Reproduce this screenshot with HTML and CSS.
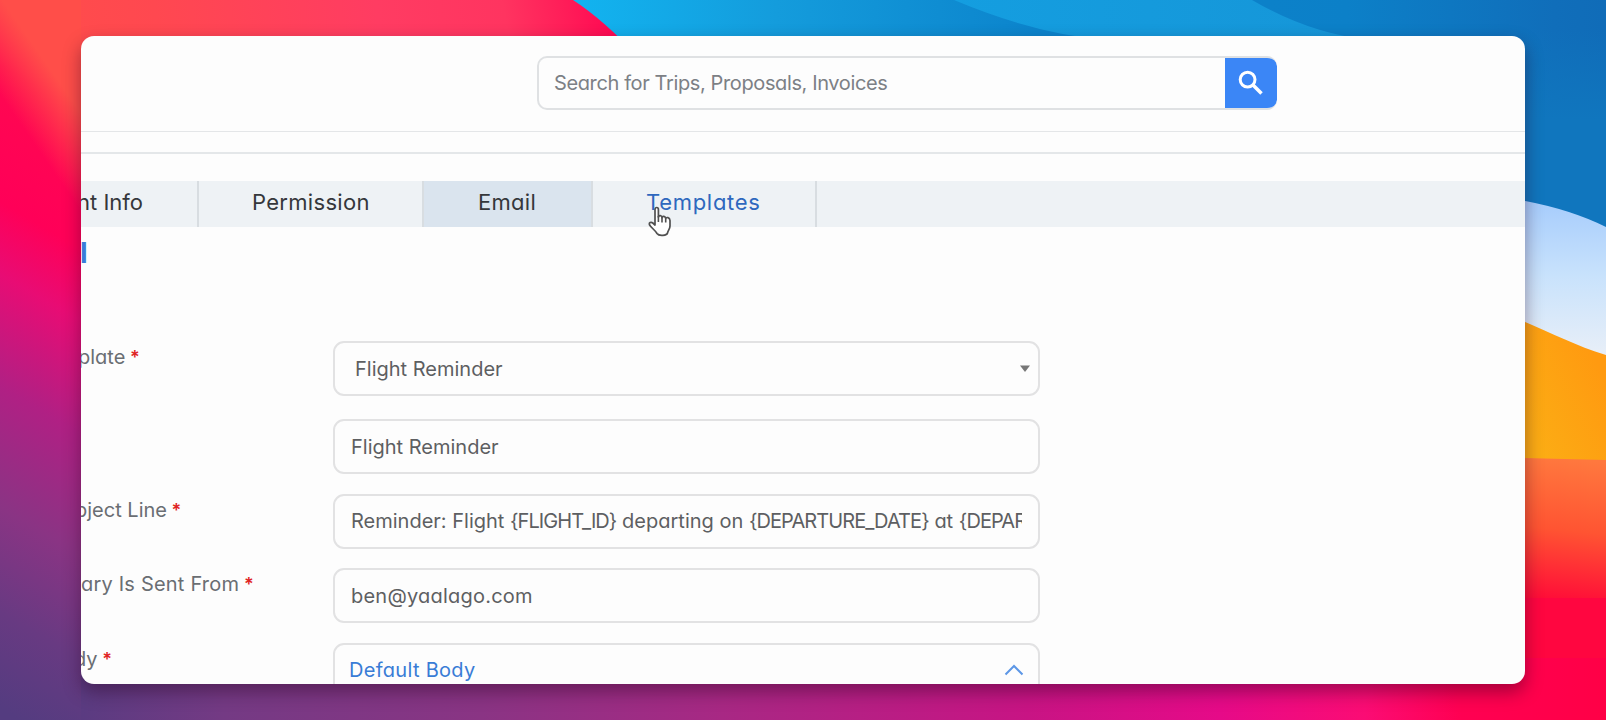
FILE: index.html
```html
<!DOCTYPE html>
<html lang="en">
<head>
<meta charset="utf-8">
<title>Email templates</title>
<link rel="stylesheet" href="styles.css">
</head>
<body>
<svg class="wallpaper" viewBox="0 0 1606 720" preserveAspectRatio="none" aria-hidden="true">
  <defs>
    <linearGradient id="left" x1="250" y1="50" x2="-100" y2="650" gradientUnits="userSpaceOnUse">
      <stop offset="0" stop-color="#ff3c50"/><stop offset=".2" stop-color="#ff0850"/><stop offset=".37" stop-color="#ff0058"/>
      <stop offset=".46" stop-color="#e80c74"/><stop offset=".6" stop-color="#b02084"/><stop offset=".75" stop-color="#8a3484"/>
      <stop offset=".88" stop-color="#683a82"/><stop offset="1" stop-color="#543c80"/>
    </linearGradient>
    <linearGradient id="bottom" x1="0" y1="0" x2="1606" y2="0" gradientUnits="userSpaceOnUse">
      <stop offset="0" stop-color="#543c80"/><stop offset=".05" stop-color="#5a3b81"/><stop offset=".14" stop-color="#743a84"/><stop offset=".3" stop-color="#8a3484"/><stop offset=".45" stop-color="#a82884"/>
      <stop offset=".64" stop-color="#c81484"/><stop offset=".76" stop-color="#e60a88"/><stop offset=".85" stop-color="#fb0c74"/>
      <stop offset=".91" stop-color="#ff0052"/><stop offset="1" stop-color="#ff0046"/>
    </linearGradient>
    <linearGradient id="top" x1="0" y1="36" x2="620" y2="-60" gradientUnits="userSpaceOnUse">
      <stop offset="0" stop-color="#ff4e49"/><stop offset=".25" stop-color="#ff4850"/><stop offset=".6" stop-color="#ff3c62"/>
      <stop offset=".8" stop-color="#ff3460"/><stop offset=".9" stop-color="#ff1c58"/><stop offset="1" stop-color="#ff0050"/>
    </linearGradient>
    <linearGradient id="corner" x1="58" y1="80" x2="12" y2="112" gradientUnits="userSpaceOnUse">
      <stop offset="0" stop-color="#ff4e49"/><stop offset="1" stop-color="#ff4e49" stop-opacity="0"/>
    </linearGradient>
    <linearGradient id="blue" x1="570" y1="0" x2="1606" y2="0" gradientUnits="userSpaceOnUse">
      <stop offset="0" stop-color="#12b4f0"/><stop offset=".2" stop-color="#149cdc"/><stop offset=".45" stop-color="#0c84cc"/>
      <stop offset=".75" stop-color="#0c80c8"/><stop offset=".95" stop-color="#106eba"/><stop offset="1" stop-color="#106cb8"/>
    </linearGradient>
    <linearGradient id="side" x1="0" y1="30" x2="0" y2="120" gradientUnits="userSpaceOnUse">
      <stop offset="0" stop-color="#1076be" stop-opacity="0"/><stop offset="1" stop-color="#1076be"/>
    </linearGradient>
    <linearGradient id="sky" x1="0" y1="200" x2="0" y2="350" gradientUnits="userSpaceOnUse">
      <stop offset="0" stop-color="#a6ccfc"/><stop offset=".5" stop-color="#c8e2fc"/><stop offset="1" stop-color="#e6eef8"/>
    </linearGradient>
    <linearGradient id="amber" x1="1525" y1="420" x2="1606" y2="380" gradientUnits="userSpaceOnUse">
      <stop offset="0" stop-color="#fcac14"/><stop offset="1" stop-color="#ff9a10"/>
    </linearGradient>
    <linearGradient id="coral" x1="1560" y1="458" x2="1545" y2="600" gradientUnits="userSpaceOnUse">
      <stop offset="0" stop-color="#ff783e"/><stop offset=".5" stop-color="#ff5432"/><stop offset="1" stop-color="#ff0c38"/>
    </linearGradient>
    <linearGradient id="wave" x1="950" y1="0" x2="1350" y2="0" gradientUnits="userSpaceOnUse">
      <stop offset="0" stop-color="#149ee0"/><stop offset="1" stop-color="#1696d8"/>
    </linearGradient>
  </defs>
  <rect width="1606" height="720" fill="url(#left)"/>
  <rect y="600" x="81" width="1525" height="120" fill="url(#bottom)"/>
  <path d="M81 0H640V60H81Z" fill="url(#top)"/>
  <path d="M0 0H81V260H0Z" fill="url(#corner)"/>
  <path d="M573 0H1606V260H1500V60H641Q604 20 573 0Z" fill="url(#blue)"/>
  <path d="M1520 30H1606V260H1520Z" fill="url(#side)"/>
  <path d="M954 0H1252Q1310 34 1370 40H1110Q1040 36 954 0Z" fill="url(#wave)"/>
  <path d="M1520 200Q1570 209 1606 227V360H1520Z" fill="url(#sky)"/>
  <path d="M1520 320C1550 332 1575 346 1606 355V470H1520Z" fill="url(#amber)"/>
  <path d="M1520 458L1606 460V600H1520Z" fill="url(#coral)"/>
  <rect x="1520" y="598" width="86" height="60" fill="#ff0640"/>
</svg>
<main class="window">
  <header class="topbar">
    <div class="search">
      <span class="search-text">Search for Trips, Proposals, Invoices</span>
      <button class="search-button" aria-label="Search">
        <svg width="26" height="26" viewBox="0 0 26 26" fill="none" stroke="#fff"><circle cx="9.6" cy="9.6" r="7.4" stroke-width="3"/><path d="M15 15L23.5 23.5" stroke-width="3.6"/></svg>
      </button>
    </div>
  </header>
  <div class="spacer"></div>
  <nav class="tabs">
    <a class="tab tab-info"><span>nt Info</span></a>
    <a class="tab tab-permission">Permission</a>
    <a class="tab tab-email">Email</a>
    <a class="tab tab-templates">Templates</a>
  </nav>
  <h1 class="title">l</h1>
  <form class="form">
    <div class="row row-template"><label class="label"><span class="l-template">plate <b>*</b></span></label><div class="field select"><span class="value">Flight Reminder</span><svg class="caret" width="12" height="8"><path d="M1 .5H11L6 7Z" fill="#777"/></svg></div></div>
    <div class="row row-name"><label class="label"></label><div class="field"><span class="value">Flight Reminder</span></div></div>
    <div class="row"><label class="label"><span class="l-subject">bject Line <b>*</b></span></label><div class="field"><span class="value">Reminder: Flight <i>{FLIGHT_ID}</i> departing on <i>{DEPARTURE_DATE}</i> at <i>{DEPARTURE</i></span></div></div>
    <div class="row"><label class="label"><span class="l-from">ary Is Sent From <b>*</b></span></label><div class="field"><span class="value value-mail">ben@yaalago.com</span></div></div>
    <div class="row"><label class="label"><span class="l-body">dy <b>*</b></span></label><div class="field accordion"><span class="value">Default Body</span><svg width="20" height="12" fill="none" stroke="#5d97e6" stroke-width="2"><path d="M1.5 10.5L10 2L18.5 10.5"/></svg></div></div>
  </form>
</main>
<svg class="cursor" width="24" height="32" viewBox="0 0 24 32" aria-hidden="true">
  <path d="M7 3.5C7 .8 10.4 .8 10.4 3.5V11C10.8 9 14 9.2 14 11.7C14.5 9.8 17.5 10 17.7 12.5C18.2 11 21.8 11 22 14.5V20C22 23 20 24.5 19.5 27C19 29.5 11 30.5 9 27.5C7.5 24.5 3 21.5 1.6 19C.6 16.6 3 15.5 4.8 17L7 19Z" fill="#fff" stroke="#505050" stroke-width="1.7" stroke-linejoin="round"/>
  <path d="M10.4 10V16M14 11.5V16.5M17.7 12.5V16.5" stroke="#505050" stroke-width="1.6"/>
</svg>
</body>
</html>
```
FILE: styles.css
```css
* { box-sizing: border-box; }
body { margin: 0; width: 1606px; height: 720px; padding: 36px 81px; overflow: hidden; font-family: Inter, "Open Sans", sans-serif; font-feature-settings: "cv11"; font-size: 20px; color: #5d5f62; }
.wallpaper { position: absolute; inset: 0; width: 1606px; height: 720px; }
.window { position: relative; width: 1444px; height: 648px; border-radius: 13px; overflow: hidden; background: #fdfdfd; box-shadow: 0 8px 18px rgba(40,0,30,.42); }
.topbar { height: 96px; padding: 20px 0 0 456px; border-bottom: 1px solid #e4e6e8; }
.search { width: 740px; height: 54px; display: flex; justify-content: space-between; border: 2px solid #dfe1e3; border-right: 0; border-radius: 10px; overflow: hidden; }
.search-text { padding-left: 15px; line-height: 51px; color: #7c8085; letter-spacing: -.38px; }
.search-button { width: 52px; height: 54px; margin-top: -2px; border: 0; border-radius: 0 10px 10px 0; background: #3b86f6; display: flex; align-items: center; justify-content: center; padding: 0; }
.spacer { height: 22px; border-bottom: 2px solid #e4e7e9; }
.tabs { display: flex; height: 46px; margin-top: 27px; background: #eef2f5; font-size: 22px; line-height: 43px; color: #35373b; white-space: nowrap; }
.tab { border-right: 2px solid #d8dde1; }
.tab-info { width: 118px; }
.tab-info span { margin-left: -4px; }
.tab-permission { width: 225px; padding-left: 53px; letter-spacing: .3px; }
.tab-email { width: 169px; padding-left: 54px; background: #dae4ee; letter-spacing: .3px; }
.tab-templates { width: 224px; padding-left: 53px; color: #2e68be; letter-spacing: .7px; }
.title { margin: 0 0 0 -1px; height: 50px; font-size: 28px; line-height: 52px; color: #3a7cd8; }
.form { padding-top: 64px; }
.row { display: flex; height: 74.5px; }
.row-template { height: 78px; }
.label { width: 252px; flex: none; line-height: 32px; white-space: nowrap; color: #6a6e73; }
.label b { color: #e02424; font-size: 18px; font-weight: 600; margin-left: -1px; }
.l-template { margin-left: -3px; }
.l-subject { margin-left: -6px; }
.l-from { letter-spacing: .2px; }
.l-body { margin-left: -7px; }
.field { width: 707px; height: 55px; flex: none; display: flex; justify-content: space-between; align-items: center; padding: 0 16px; border: 2px solid #e2e2e3; border-radius: 11px; }
.value { line-height: 50px; overflow: hidden; white-space: nowrap; }
.value i { font-style: normal; letter-spacing: -.93px; }
.value-mail { letter-spacing: .22px; }
.select { padding-left: 20px; padding-right: 7px; }
.accordion { padding: 0 14px; color: #397cd6; letter-spacing: .3px; }
.cursor { position: absolute; left: 648px; top: 206px; }
```
